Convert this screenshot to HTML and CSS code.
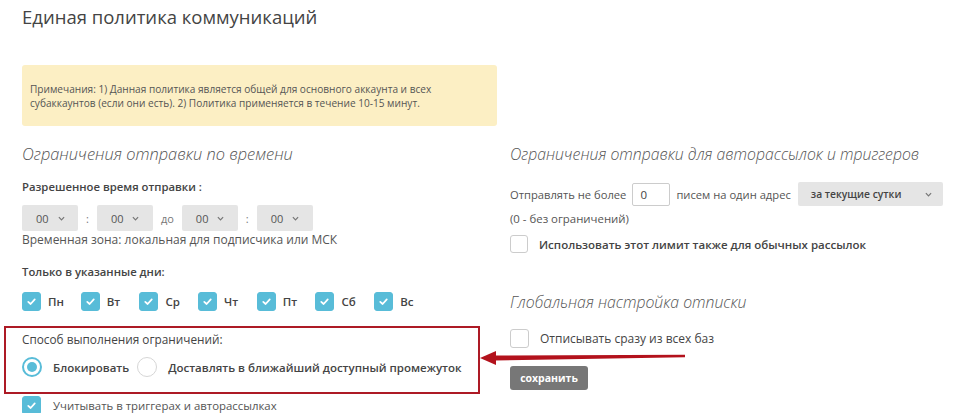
FILE: index.html
```html
<!DOCTYPE html>
<html lang="ru">
<head>
  <meta charset="UTF-8">
  <meta name="viewport" content="width=device-width, initial-scale=1.0">
  <title>Единая политика коммуникаций</title>
  <link rel="stylesheet" href="styles.css">
</head>
<body>
  <div class="page">
    <h1 class="page-title">Единая политика коммуникаций</h1>

    <div class="note">
      Примечания: 1) Данная политика является общей для основного аккаунта и всех
      субаккаунтов (если они есть). 2) Политика применяется в течение 10-15 минут.
    </div>

    <div class="columns">
      <!-- Левая колонка: ограничения по времени -->
      <div class="col col-left">
        <h2 class="section-title">Ограничения отправки по времени</h2>

        <div class="field-label label-time">Разрешенное время отправки :</div>
        <div class="time-row">
          <div class="select select-small"><span>00</span><svg class="chevron" viewBox="0 0 8 5"><polyline points="1,1 4,4 7,1"/></svg></div>
          <span class="sep">:</span>
          <div class="select select-small"><span>00</span><svg class="chevron" viewBox="0 0 8 5"><polyline points="1,1 4,4 7,1"/></svg></div>
          <span class="sep">до</span>
          <div class="select select-small"><span>00</span><svg class="chevron" viewBox="0 0 8 5"><polyline points="1,1 4,4 7,1"/></svg></div>
          <span class="sep">:</span>
          <div class="select select-small"><span>00</span><svg class="chevron" viewBox="0 0 8 5"><polyline points="1,1 4,4 7,1"/></svg></div>
        </div>
        <div class="hint">Временная зона: локальная для подписчика или МСК</div>

        <div class="field-label label-days">Только в указанные дни:</div>
        <div class="days">
          <label class="check-item"><span class="box checked"><svg viewBox="0 0 12 12"><polyline points="3,6.3 5.2,8.3 9,4"/></svg></span><span class="day">Пн</span></label>
          <label class="check-item"><span class="box checked"><svg viewBox="0 0 12 12"><polyline points="3,6.3 5.2,8.3 9,4"/></svg></span><span class="day">Вт</span></label>
          <label class="check-item"><span class="box checked"><svg viewBox="0 0 12 12"><polyline points="3,6.3 5.2,8.3 9,4"/></svg></span><span class="day">Ср</span></label>
          <label class="check-item"><span class="box checked"><svg viewBox="0 0 12 12"><polyline points="3,6.3 5.2,8.3 9,4"/></svg></span><span class="day">Чт</span></label>
          <label class="check-item"><span class="box checked"><svg viewBox="0 0 12 12"><polyline points="3,6.3 5.2,8.3 9,4"/></svg></span><span class="day">Пт</span></label>
          <label class="check-item"><span class="box checked"><svg viewBox="0 0 12 12"><polyline points="3,6.3 5.2,8.3 9,4"/></svg></span><span class="day">Сб</span></label>
          <label class="check-item"><span class="box checked"><svg viewBox="0 0 12 12"><polyline points="3,6.3 5.2,8.3 9,4"/></svg></span><span class="day">Вс</span></label>
        </div>

        <div class="method-box">
          <div class="method-label">Способ выполнения ограничений:</div>
          <div class="radios">
            <label class="radio-item"><span class="radio on"></span><span class="radio-text">Блокировать</span></label>
            <label class="radio-item"><span class="radio"></span><span class="radio-text">Доставлять в ближайший доступный промежуток</span></label>
          </div>
        </div>

        <label class="check-item triggers">
          <span class="box checked"><svg viewBox="0 0 12 12"><polyline points="3,6.3 5.2,8.3 9,4"/></svg></span>
          <span class="plain">Учитывать в триггерах и авторассылках</span>
        </label>
      </div>

      <!-- Правая колонка: лимиты и отписка -->
      <div class="col col-right">
        <h2 class="section-title">Ограничения отправки для авторассылок и триггеров</h2>

        <div class="limit-row">
          <span>Отправлять не более</span>
          <div class="num-input">0</div>
          <span>писем на один адрес</span>
          <div class="select select-wide"><span>за текущие сутки</span><svg class="chevron" viewBox="0 0 8 5"><polyline points="1,1 4,4 7,1"/></svg></div>
        </div>
        <div class="hint hint-zero">(0 - без ограничений)</div>

        <label class="check-item opt">
          <span class="box"></span>
          <span class="strong">Использовать этот лимит также для обычных рассылок</span>
        </label>

        <h2 class="section-title title-unsub">Глобальная настройка отписки</h2>

        <label class="check-item opt unsub">
          <span class="box"></span>
          <span class="plain-lg">Отписывать сразу из всех баз</span>
        </label>

        <button class="save-btn">сохранить</button>
      </div>
    </div>

    <!-- стрелка-указатель поверх контента -->
    <svg class="pointer-arrow" viewBox="0 0 210 22" width="210" height="22">
      <polygon points="17,9.5 207,8.8 207,11.2 17,14.5" />
      <polygon points="2,12 18,5 18,19" />
    </svg>
  </div>
</body>
</html>
```

FILE: styles.css
```css
html, body {
  margin: 0;
  padding: 0;
  background: #fff;
}
body {
  font-family: "Open Sans", "DejaVu Sans", sans-serif;
  color: #555;
  font-size: 12px;
  overflow: hidden;
}
.page {
  position: relative;
  padding: 2px 0 0 22px;
  height: 411px;
}
.page-title {
  margin: 0;
  font-size: 18.5px;
  font-weight: 400;
  line-height: 30px;
  color: #444;
}
.note {
  margin-top: 33px;
  width: 459px;
  padding: 17px 8px 16px 8px;
  background: #fcefc4;
  border-radius: 3px;
  font-size: 10.1px;
  line-height: 14px;
  color: #555;
}
.columns {
  display: grid;
  grid-template-columns: 488px 1fr;
  margin-top: 16px;
}
.section-title {
  margin: 0;
  font-size: 16.4px;
  font-weight: 300;
  font-style: italic;
  line-height: 24px;
  color: #555;
  white-space: nowrap;
}
.col-right .section-title {
  font-size: 15.8px;
}
.field-label {
  font-size: 11.3px;
  font-weight: 600;
  line-height: 18px;
  color: #444;
}
.label-time {
  margin-top: 12px;
}
.time-row {
  display: flex;
  align-items: center;
  gap: 8px;
  margin-top: 9px;
}
.sep {
  color: #777;
  font-size: 11px;
}
.select {
  display: flex;
  align-items: center;
  background: #e5e5e5;
  border-radius: 2px;
  color: #555;
  font-size: 11px;
}
.select-small {
  width: 56px;
  height: 26px;
  padding-left: 14px;
  box-sizing: border-box;
  gap: 9px;
}
.select-wide {
  width: 145px;
  height: 24px;
  padding: 0 11px 0 13px;
  box-sizing: border-box;
  justify-content: space-between;
  font-size: 10.3px;
  font-weight: 600;
  color: #444;
}
.chevron {
  width: 7px;
  height: 5px;
  fill: none;
  stroke: #777;
  stroke-width: 1.4;
}
.hint {
  line-height: 18px;
}
.label-days {
  margin-top: 14px;
}
.days {
  display: grid;
  grid-template-columns: repeat(7, 58.7px);
  margin-top: 11px;
}
.check-item {
  display: flex;
  align-items: center;
  gap: 7px;
}
.box {
  width: 19px;
  height: 19px;
  box-sizing: border-box;
  border-radius: 3px;
  border: 1px solid #ccc;
  background: #fff;
  display: flex;
  align-items: center;
  justify-content: center;
  flex: none;
}
.box.checked {
  background: #58bcd8;
  border-color: #58bcd8;
}
.box svg {
  width: 13px;
  height: 13px;
  fill: none;
  stroke: #fff;
  stroke-width: 1.6;
  stroke-linecap: round;
  stroke-linejoin: round;
}
.day {
  font-size: 11.5px;
  font-weight: 600;
  color: #444;
}
.method-box {
  margin: 15px 0 0 -18px;
  width: 476px;
  box-sizing: border-box;
  border: 2px solid #ad1a25;
  padding: 2px 0 15px 16px;
}
.method-label {
  font-size: 11.8px;
  line-height: 18px;
  color: #444;
}
.radios {
  display: flex;
  align-items: center;
  margin-top: 9px;
  gap: 8px;
}
.radio-item {
  display: flex;
  align-items: center;
  gap: 11px;
}
.radio {
  width: 20px;
  height: 20px;
  box-sizing: border-box;
  border-radius: 50%;
  border: 1px solid #d6d6d6;
  background: #fff;
  position: relative;
}
.radio.on {
  border: 2px solid #58bcd8;
}
.radio.on::after {
  content: "";
  position: absolute;
  left: 3px;
  top: 3px;
  width: 10px;
  height: 10px;
  border-radius: 50%;
  background: #58bcd8;
}
.radio-text {
  font-size: 11.5px;
  font-weight: 600;
  color: #444;
}
.triggers {
  margin-top: 2px;
  gap: 12px;
}
.plain {
  font-size: 11.4px;
  color: #555;
}
.limit-row {
  display: flex;
  align-items: center;
  margin-top: 16px;
  height: 24px;
  font-size: 11.2px;
}
.limit-row > span {
  margin-right: 6px;
}
.num-input {
  width: 38px;
  height: 23px;
  box-sizing: border-box;
  border: 1px solid #ccc;
  border-radius: 2px;
  padding-left: 7px;
  line-height: 21px;
  font-size: 11.5px;
  color: #444;
  margin-right: 6px;
}
.limit-row > span:nth-of-type(2) {
  margin-right: 7px;
}
.hint-zero {
  margin-top: 4px;
  font-size: 11.4px;
}
.opt {
  gap: 11px;
}
.opt .box {
  width: 18px;
  height: 18px;
}
.col-right > .opt:first-of-type {
  margin-top: 7px;
}
.strong {
  font-size: 11.5px;
  font-weight: 600;
  color: #444;
}
.title-unsub {
  margin-top: 37px;
}
.unsub {
  margin-top: 15px;
}
.unsub .box {
  width: 19px;
  height: 19px;
}
.plain-lg {
  font-size: 12px;
  color: #444;
}
.save-btn {
  display: block;
  margin-top: 18px;
  width: 78px;
  height: 24px;
  border: none;
  border-radius: 3px;
  background: #777;
  color: #fff;
  font-family: "Open Sans", sans-serif;
  font-size: 10.5px;
  font-weight: 700;
  padding: 0;
}
.pointer-arrow {
  position: absolute;
  left: 478px;
  top: 346px;
  fill: #b3121c;
}
```
